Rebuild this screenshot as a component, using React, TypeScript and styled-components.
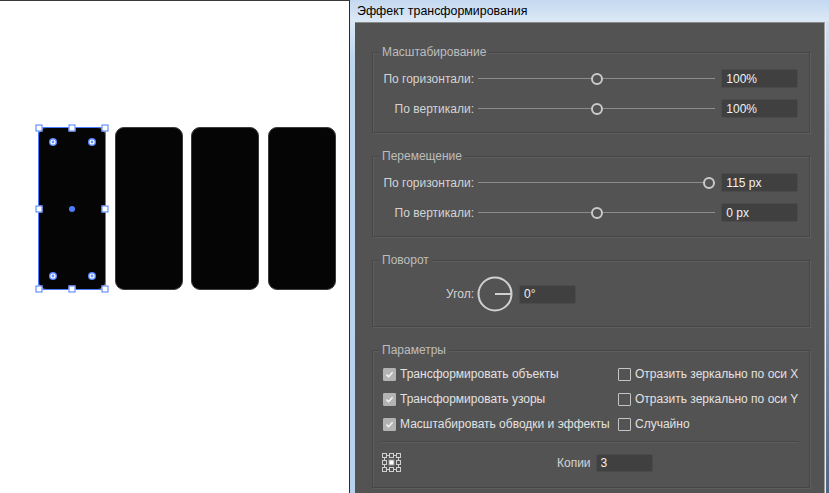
import React from 'react';
import styled, { createGlobalStyle } from 'styled-components';

const GlobalStyle = createGlobalStyle`
  html, body { margin: 0; padding: 0; background: #fff; }
  body {
    width: 829px; height: 493px; overflow: hidden;
    font-family: "Liberation Sans", Arial, sans-serif;
  }
  * { box-sizing: border-box; }
`;

const Screen = styled.div`
  display: flex;
  width: 829px;
  height: 493px;
  overflow: hidden;
`;

/* ---------- canvas ---------- */
const Canvas = styled.div`
  width: 350px;
  flex: none;
  background: #fff;
  border-top: 1px solid #3a3a3a;
  border-right: 1px solid #2b2b2b;
`;

const ShapeRow = styled.div`
  display: flex;
  gap: 8.67px;
  padding: 126px 0 0 38px;
`;

const Shape = styled.div`
  position: relative;
  width: 68px;
  height: 163px;
  border-radius: 9px;
  background: #050505;
  border: 1px solid #3c3c3c;
`;

const SelectionBox = styled.div`
  position: absolute;
  inset: -1px;
  border: 1px solid #4a7cff;
`;

const Handle = styled.span<{ $x: number; $y: number }>`
  position: absolute;
  left: ${(p) => p.$x}%;
  top: ${(p) => p.$y}%;
  width: 7px;
  height: 7px;
  transform: translate(-50%, -50%);
  background: #fff;
  border: 1px solid #4a7cff;
`;

const CenterDot = styled.span`
  position: absolute;
  left: 50%;
  top: 50%;
  width: 6px;
  height: 6px;
  border-radius: 50%;
  transform: translate(-50%, -50%);
  background: #4f7dff;
`;

const CornerWidget = styled.svg<{ $x: number; $y: number }>`
  position: absolute;
  left: ${(p) => p.$x}px;
  top: ${(p) => p.$y}px;
  width: 9px;
  height: 9px;
  transform: translate(-50%, -50%);
`;

/* ---------- window ---------- */
const Window = styled.div`
  flex: 1;
  display: flex;
  flex-direction: column;
  background: linear-gradient(to bottom, #c3d8f0 0px, #dbe8f6 20px, #bed5ef 60px, #b9d1ee 100%);
`;

const TitleBar = styled.div`
  height: 22px;
  flex: none;
  display: flex;
  align-items: center;
  padding-left: 7px;
  font-family: "Liberation Sans", Arial, sans-serif;
  font-size: 12.4px;
  color: #000;
`;

const Frame = styled.div`
  flex: 1;
  display: flex;
  min-height: 0;
  padding-left: 5px;
`;

const RightEdge = styled.div`
  width: 6px;
  flex: none;
  background: linear-gradient(to bottom, #d2dfee 0%, #9fb0c6 40%, #52647f 100%);
  border-left: 1px solid #e8eef5;
`;

const Panel = styled.div`
  flex: 1;
  min-width: 0;
  display: flex;
  flex-direction: column;
  gap: 15px;
  background: #535353;
  border-top: 1px solid #8a8a8a;
  border-right: 1px solid #9c9c9c;
  padding: 21px 14px 0 17px;
  color: #d6d6d6;
  font-size: 12px;
`;

const Group = styled.fieldset<{ $pt?: number; $pb?: number }>`
  margin: 0;
  min-width: 0;
  border: 1px solid #464646;
  box-shadow: 1px 1px 0 #5e5e5e, inset 1px 1px 0 #5e5e5e;
  padding: ${(p) => p.$pt ?? 9}px 11px ${(p) => p.$pb ?? 14}px 9px;
  display: flex;
  flex-direction: column;
`;

const Legend = styled.legend`
  padding: 0 3px;
  margin-left: -3px;
  font-size: 12px;
  line-height: 16px;
  color: #bdbdbd;
  background: #535353;
`;

const Rows = styled.div<{ $gap: number }>`
  display: flex;
  flex-direction: column;
  gap: ${(p) => p.$gap}px;
`;

const Row = styled.div`
  display: flex;
  align-items: center;
`;

const RowLabel = styled.span`
  width: 92px;
  flex: none;
  text-align: right;
  white-space: nowrap;
  color: #d4d4d4;
`;

const Track = styled.div`
  position: relative;
  flex: 1;
  height: 19px;
  margin: 0 6px 0 4px;
  &::before {
    content: "";
    position: absolute;
    left: 0;
    right: 0;
    top: 9px;
    height: 1px;
    background: #8c8c8c;
  }
`;

const Knob = styled.span`
  position: absolute;
  top: 50%;
  width: 12px;
  height: 12px;
  border-radius: 50%;
  border: 2px solid #cacaca;
  background: #535353;
  transform: translate(-50%, -50%);
`;

const Field = styled.input<{ $w: number; $h?: number }>`
  width: ${(p) => p.$w}px;
  height: ${(p) => p.$h ?? 19}px;
  flex: none;
  margin: 0;
  padding: 0 0 0 4px;
  background: #404040;
  border: 1px solid #4b4b4b;
  border-radius: 2px;
  color: #f2f2f2;
  font-family: "Liberation Sans", Arial, sans-serif;
  font-size: 12px;
  outline: none;
`;

const Dial = styled.svg`
  width: 36px;
  height: 36px;
  flex: none;
  margin: 0 6px 0 3px;
`;

const CheckGrid = styled.div`
  display: grid;
  grid-template-columns: 235px 1fr;
  grid-auto-rows: 16px;
  row-gap: 9px;
`;

const CheckItem = styled.label`
  display: flex;
  align-items: center;
  gap: 4px;
  white-space: nowrap;
  color: #e2e2e2;
`;

const Box = styled.span<{ $on: boolean }>`
  width: 13px;
  height: 13px;
  flex: none;
  margin-left: 1px;
  border-radius: 1px;
  display: flex;
  align-items: center;
  justify-content: center;
  border: 1px solid ${(p) => (p.$on ? '#b3b3b3' : '#c4c4c4')};
  background: ${(p) => (p.$on ? '#b3b3b3' : 'transparent')};
`;

const Separator = styled.div`
  height: 2px;
  margin: 9px 0 10px;
  border-top: 1px solid #464646;
  border-bottom: 1px solid #5e5e5e;
`;

const BottomRow = styled.div`
  display: flex;
  align-items: center;
  height: 19px;
`;

const CopiesLabel = styled.span`
  margin: 0 5px 0 156px;
  color: #d4d4d4;
`;

/* ---------- pieces ---------- */
const Slider = ({ label, value, pos }: { label: string; value: string; pos: number }) => (
  <Row>
    <RowLabel>{label}</RowLabel>
    <Track>
      <Knob style={{ left: `calc(6px + (100% - 12px) * ${pos})` }} />
    </Track>
    <Field $w={77} readOnly defaultValue={value} />
  </Row>
);

const Check = ({ on, children }: { on: boolean; children: React.ReactNode }) => (
  <CheckItem>
    <Box $on={on}>
      {on && (
        <svg width="9" height="9" viewBox="0 0 9 9">
          <path d="M1.5 4.6 L3.6 6.7 L7.6 2.2" fill="none" stroke="#f4f4f4" strokeWidth="1.6" />
        </svg>
      )}
    </Box>
    {children}
  </CheckItem>
);

const RefPoint = () => (
  <svg width="19" height="19" viewBox="0 0 19 19" fill="none" stroke="#cfcfcf" strokeWidth="1">
    <path d="M5 2.5 H7 M12 2.5 H14 M5 16.5 H7 M12 16.5 H14 M2.5 5 V7 M2.5 12 V14 M16.5 5 V7 M16.5 12 V14" />
    {[0.5, 7.5, 14.5].map((x) =>
      [0.5, 7.5, 14.5].map((y) =>
        x === 7.5 && y === 7.5 ? null : <rect key={`${x}-${y}`} x={x} y={y} width="4" height="4" />
      )
    )}
    <rect x="7" y="7" width="5" height="5" fill="#ffffff" stroke="#9a9a9a" />
  </svg>
);

const Widget = ({ x, y }: { x: number; y: number }) => (
  <CornerWidget $x={x} $y={y} viewBox="0 0 9 9">
    <circle cx="4.5" cy="4.5" r="4" fill="#5b88ff" />
    <circle cx="4.5" cy="4.5" r="2.6" fill="#ffffff" />
    <circle cx="4.5" cy="4.5" r="1.4" fill="#6a93ff" />
  </CornerWidget>
);

export default function App() {
  return (
    <>
      <GlobalStyle />
      <Screen>
        <Canvas>
          <ShapeRow>
            <Shape>
              <SelectionBox />
              {[
                [0, 0], [50, 0], [100, 0],
                [0, 50], [100, 50],
                [0, 100], [50, 100], [100, 100],
              ].map(([x, y]) => (
                <Handle key={`${x}-${y}`} $x={x} $y={y} />
              ))}
              <CenterDot />
              <Widget x={14} y={14} />
              <Widget x={53} y={14} />
              <Widget x={14} y={148} />
              <Widget x={53} y={148} />
            </Shape>
            <Shape />
            <Shape />
            <Shape />
          </ShapeRow>
        </Canvas>

        <Window>
          <TitleBar>Эффект трансформирования</TitleBar>
          <Frame>
            <Panel>
              <Group>
                <Legend>Масштабирование</Legend>
                <Rows $gap={11}>
                  <Slider label="По горизонтали:" value="100%" pos={0.5} />
                  <Slider label="По вертикали:" value="100%" pos={0.5} />
                </Rows>
              </Group>

              <Group>
                <Legend>Перемещение</Legend>
                <Rows $gap={11}>
                  <Slider label="По горизонтали:" value="115 px" pos={1} />
                  <Slider label="По вертикали:" value="0 px" pos={0.5} />
                </Rows>
              </Group>

              <Group $pt={8} $pb={14}>
                <Legend>Поворот</Legend>
                <Row>
                  <RowLabel>Угол:</RowLabel>
                  <Dial viewBox="0 0 36 36">
                    <circle cx="18" cy="18" r="16.5" fill="none" stroke="#d0d0d0" strokeWidth="2" />
                    <line x1="18" y1="18" x2="34.5" y2="18" stroke="#d0d0d0" strokeWidth="2" />
                  </Dial>
                  <Field $w={57} readOnly defaultValue="0°" />
                </Row>
              </Group>

              <Group $pt={8} $pb={15}>
                <Legend>Параметры</Legend>
                <CheckGrid>
                  <Check on>Трансформировать объекты</Check>
                  <Check on={false}>Отразить зеркально по оси X</Check>
                  <Check on>Трансформировать узоры</Check>
                  <Check on={false}>Отразить зеркально по оси Y</Check>
                  <Check on>Масштабировать обводки и эффекты</Check>
                  <Check on={false}>Случайно</Check>
                </CheckGrid>
                <Separator />
                <BottomRow>
                  <RefPoint />
                  <CopiesLabel>Копии</CopiesLabel>
                  <Field $w={57} $h={18} readOnly defaultValue="3" />
                </BottomRow>
              </Group>
            </Panel>
            <RightEdge />
          </Frame>
        </Window>
      </Screen>
    </>
  );
}
